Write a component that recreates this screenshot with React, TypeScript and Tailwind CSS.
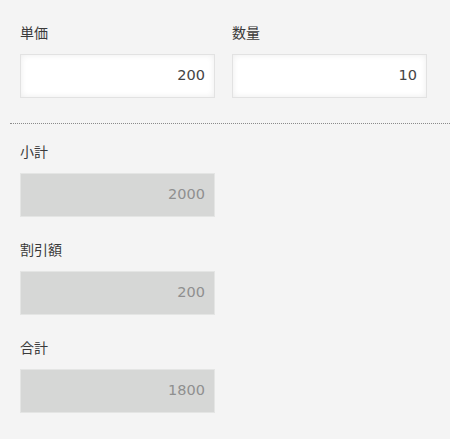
import React from "react";

const labelCls =
  "block h-5 leading-5 text-[14px] text-[#3a3a3a] mb-3 [font-family:'Noto_Sans_CJK_JP','Noto_Sans',sans-serif]";

function Field({ label, value, disabled }: { label: string; value: string; disabled?: boolean }) {
  return (
    <div className="w-[195px]">
      <div className={labelCls}>{label}</div>
      <div
        className={
          "h-[44px] border flex items-center justify-end pr-[9px] text-[14.5px] [font-family:'DejaVu_Sans',sans-serif] " +
          (disabled
            ? "bg-[#d6d7d6] border-[#e4e5e4] text-[#8f8f8f]"
            : "bg-white border-[#e2e2e2] text-[#444] shadow-[inset_0_0_6px_rgba(0,0,0,0.08)]")
        }
      >
        {value}
      </div>
    </div>
  );
}

export default function App() {
  return (
    <div className="w-[450px] h-[439px] bg-[#f4f4f4] pt-[22px]">
      <div className="flex gap-[17px] pl-5">
        <Field label="単価" value="200" />
        <Field label="数量" value="10" />
      </div>
      <div className="ml-[10px] mt-[25px] border-t border-dotted border-[#8a8a8a]" />
      <div className="pl-5 pt-[17px] flex flex-col gap-[22px]">
        <Field label="小計" value="2000" disabled />
        <Field label="割引額" value="200" disabled />
        <Field label="合計" value="1800" disabled />
      </div>
    </div>
  );
}
